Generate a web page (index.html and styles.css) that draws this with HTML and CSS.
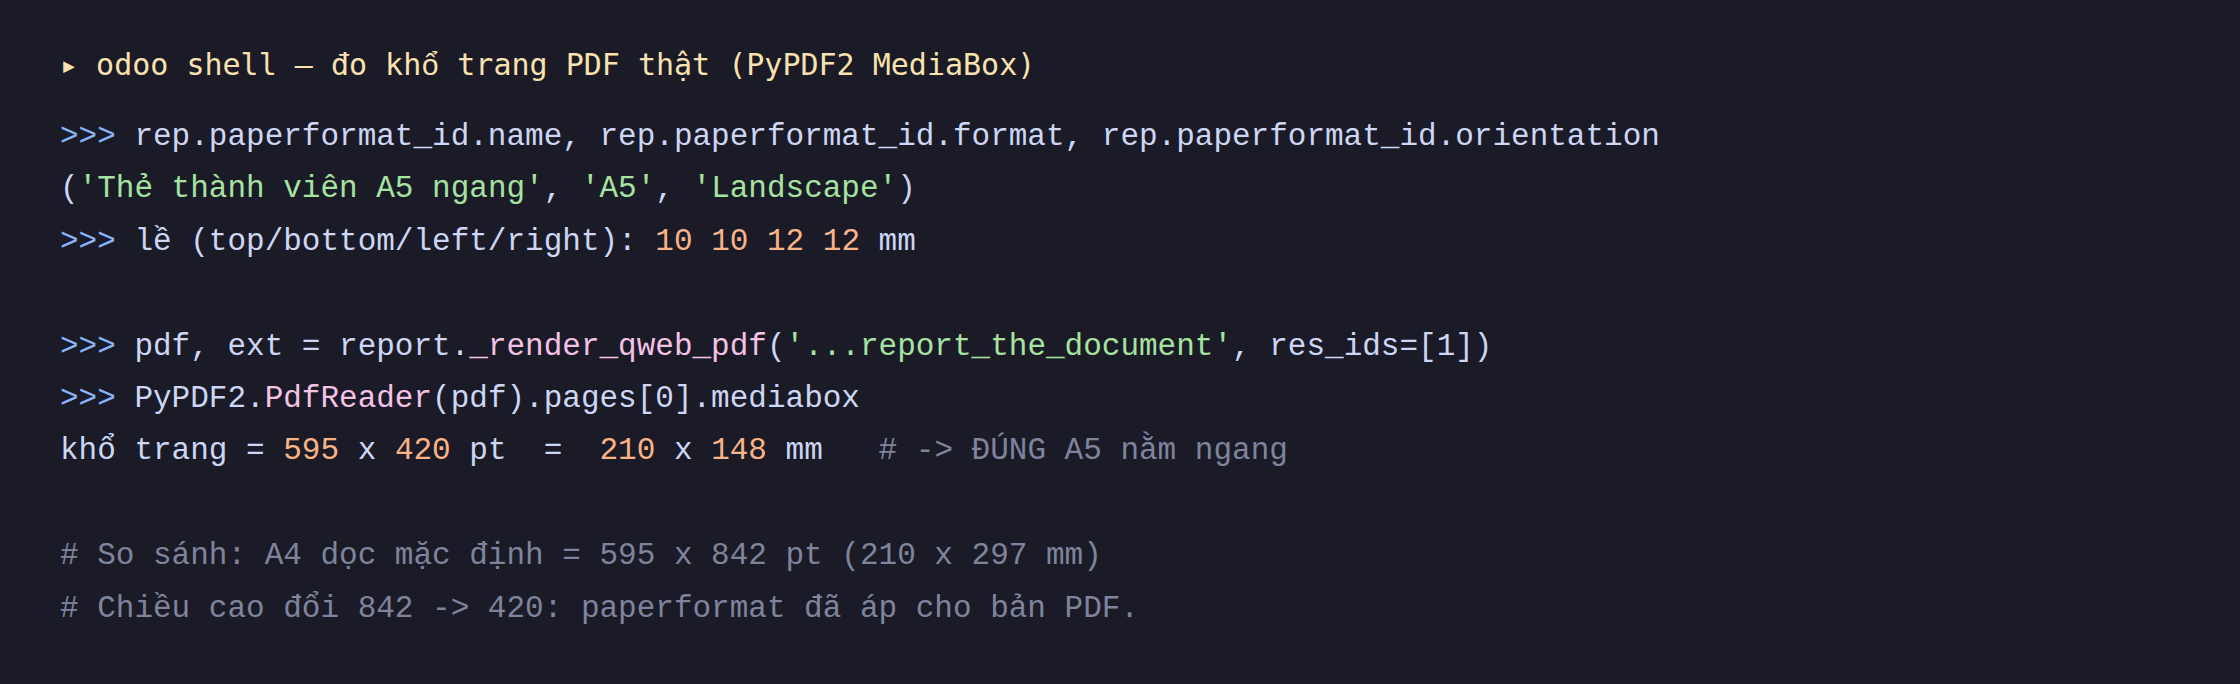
FILE: index.html
```html
<!DOCTYPE html>
<html lang="vi">
<head>
<meta charset="utf-8">
<title>odoo shell</title>
<link rel="stylesheet" href="styles.css">
</head>
<body>
<main class="panel">
  <div class="title"><span class="caret">▸</span> odoo shell — đo kh<span class="alt">ổ</span> trang PDF thật (PyPDF2 MediaBox)</div>
  <div class="code">
    <div class="line"><span class="pr">&gt;&gt;&gt;</span> rep.paperformat_id.name, rep.paperformat_id.format, rep.paperformat_id.orientation</div>
    <div class="line">(<span class="str">'Thẻ thành viên A5 ngang'</span>, <span class="str">'A5'</span>, <span class="str">'Landscape'</span>)</div>
    <div class="line"><span class="pr">&gt;&gt;&gt;</span> lề (top/bottom/left/right): <span class="num">10</span> <span class="num">10</span> <span class="num">12</span> <span class="num">12</span> mm</div>
    <div class="line"> </div>
    <div class="line"><span class="pr">&gt;&gt;&gt;</span> pdf, ext = report.<span class="fn">_render_qweb_pdf</span>(<span class="str">'...report_the_document'</span>, res_ids=[1])</div>
    <div class="line"><span class="pr">&gt;&gt;&gt;</span> PyPDF2.<span class="fn">PdfReader</span>(pdf).pages[0].mediabox</div>
    <div class="line">khổ trang = <span class="num">595</span> x <span class="num">420</span> pt  =  <span class="num">210</span> x <span class="num">148</span> mm   <span class="cm"># -&gt; ĐÚNG A5 nằm ngang</span></div>
    <div class="line"> </div>
    <div class="line cm"># So sánh: A4 dọc mặc định = 595 x 842 pt (210 x 297 mm)</div>
    <div class="line cm"># Chiều cao đổi 842 -&gt; 420: paperformat đã áp cho bản PDF.</div>
  </div>
</main>
</body>
</html>
```

FILE: styles.css
```css
html, body {
  margin: 0;
  padding: 0;
  background: #1a1b26;
}

.panel {
  box-sizing: border-box;
  width: 2240px;
  height: 684px;
  padding: 39px 60px 0 60px;
  background: #1a1b26;
}

.title {
  font-family: "DejaVu Sans Mono", monospace;
  font-size: 30px;
  line-height: 52px;
  height: 52px;
  color: #f9e2af;
  white-space: pre;
}

.title .alt {
  font-family: "Liberation Mono", monospace;
  line-height: 1;
}

.caret {
  font-size: 30px;
}

.code {
  margin-top: 20px;
  font-family: "Liberation Mono", "DejaVu Sans Mono", monospace;
  font-size: 31px;
  line-height: 52.4px;
  color: #cdd6f4;
}

.line {
  white-space: pre;
  height: 52.4px;
}

.pr { color: #89b4fa; }
.str { color: #a6e3a1; }
.num { color: #fab387; }
.fn { color: #f5c2e7; }
.cm { color: #7f849c; }
```
